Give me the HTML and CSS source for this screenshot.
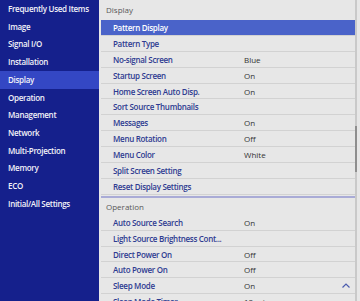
FILE: index.html
```html
<!DOCTYPE html>
<html>
<head>
  <title>Display</title>
  <link rel="stylesheet" href="styles.css">
</head>
<body>

<div class="menu">
  <!-- Menú principal -->
  <ul class="side">
    <li>Frequently Used Items</li>
    <li>Image</li>
    <li>Signal I/O</li>
    <li>Installation</li>
    <li class="on">Display</li>
    <li>Operation</li>
    <li>Management</li>
    <li>Network</li>
    <li>Multi-Projection</li>
    <li>Memory</li>
    <li>ECO</li>
    <li>Initial/All Settings</li>
  </ul>

  <!-- Submenú -->
  <div class="panel">
    <div class="group">
      <div class="head">Display</div>
      <div class="row sel"><span class="name">Pattern Display</span><span class="val"></span></div>
      <div class="row"><span class="name">Pattern Type</span><span class="val"></span></div>
      <div class="row"><span class="name">No-signal Screen</span><span class="val">Blue</span></div>
      <div class="row"><span class="name">Startup Screen</span><span class="val">On</span></div>
      <div class="row"><span class="name">Home Screen Auto Disp.</span><span class="val">On</span></div>
      <div class="row"><span class="name">Sort Source Thumbnails</span><span class="val"></span></div>
      <div class="row"><span class="name">Messages</span><span class="val">On</span></div>
      <div class="row"><span class="name">Menu Rotation</span><span class="val">Off</span></div>
      <div class="row"><span class="name">Menu Color</span><span class="val">White</span></div>
      <div class="row"><span class="name">Split Screen Setting</span><span class="val"></span></div>
      <div class="row"><span class="name">Reset Display Settings</span><span class="val"></span></div>
    </div>
    <div class="group sep">
      <div class="head head2">Operation</div>
      <div class="row"><span class="name">Auto Source Search</span><span class="val">On</span></div>
      <div class="row"><span class="name">Light Source Brightness Cont...</span><span class="val"></span></div>
      <div class="row"><span class="name">Direct Power On</span><span class="val">Off</span></div>
      <div class="row"><span class="name">Auto Power On</span><span class="val">Off</span></div>
      <div class="row"><span class="name">Sleep Mode</span><span class="val">On</span>
        <svg class="up" width="8" height="5" viewBox="0 0 8 5"><path d="M0.5 4.5 L4 1 L7.5 4.5" fill="none" stroke="#4b5cae" stroke-width="1.2"/></svg>
      </div>
      <div class="row"><span class="name">Sleep Mode Timer</span><span class="val">10 min</span></div>
    </div>
    <div class="track"><div class="thumb"></div></div>
  </div>
</div>

</body>
</html>
```

FILE: styles.css
```css
body { margin: 0; font-family: "Open Sans", "Noto Sans", sans-serif; font-size: 8px; font-weight: 600; letter-spacing: -0.3px; }
.menu { display: flex; width: 360px; height: 301px; overflow: hidden; background: #e7e7e7; }

.side { list-style: none; margin: 0; padding: 0; width: 99px; background: #15208c; color: #f2f2f8; flex-shrink: 0; }
.side li { height: 17.73px; line-height: 17.73px; padding-left: 8px; white-space: nowrap; }
.side li.on { background: #3447c4; }

.panel { position: relative; flex: 1; padding-left: 2px; }
.group { width: 254px; }
.head { height: 20px; line-height: 20px; padding-left: 5px; color: #585858; font-weight: 400; letter-spacing: 0; }
.head2 { height: 17px; line-height: 17px; }
.sep { margin-top: 1px; border-top: 2px solid #a9abd6; }

.row { display: flex; align-items: center; height: 14.9px; border-bottom: 1px solid #d2d2d2; position: relative; }
.row .name { width: 131px; padding-left: 12px; color: #2e3b91; white-space: nowrap; }
.row .val { color: #333; font-weight: 400; letter-spacing: 0; }
.row.sel { background: #4a63c9; }
.row.sel .name { color: #fff; }
.up { position: absolute; right: 5px; top: 5px; }

.track { position: absolute; right: 3px; top: 0; width: 2px; height: 301px; background: #c9c9c9; }
.thumb { position: absolute; left: 0; top: 126px; width: 2px; height: 46px; background: #8e8e8e; }
```
